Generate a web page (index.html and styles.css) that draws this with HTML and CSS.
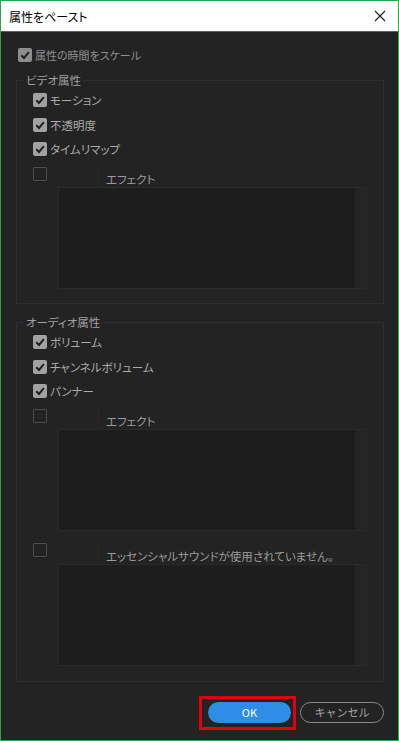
FILE: index.html
```html
<!DOCTYPE html>
<html lang="ja">
<head>
  <meta charset="UTF-8" />
  <meta name="viewport" content="width=device-width, initial-scale=1.0" />
  <title>属性をペースト</title>
  <link rel="stylesheet" href="styles.css">
</head>
<body>

  <div class="dialog">
    <div class="titlebar">
      <span class="title">属性をペースト</span>
      <svg class="close" width="12" height="12" viewBox="0 0 12 12">
        <path d="M1 1 L11 11 M11 1 L1 11" stroke="#1a1a1a" stroke-width="1.1" fill="none" />
      </svg>
    </div>

    <div class="content">
      <div class="row top">
        <span class="box checked dim"><svg viewBox="0 0 14 14"><path d="M3.3 7.3 L6 10 L10.9 4.2" /></svg></span>
        <span class="label">属性の時間をスケール</span>
      </div>

      <fieldset class="group">
        <legend>ビデオ属性</legend>
        <div class="row">
          <span class="box checked"><svg viewBox="0 0 14 14"><path d="M3.3 7.3 L6 10 L10.9 4.2" /></svg></span>
          <span class="label">モーション</span>
        </div>
        <div class="row">
          <span class="box checked"><svg viewBox="0 0 14 14"><path d="M3.3 7.3 L6 10 L10.9 4.2" /></svg></span>
          <span class="label">不透明度</span>
        </div>
        <div class="row">
          <span class="box checked"><svg viewBox="0 0 14 14"><path d="M3.3 7.3 L6 10 L10.9 4.2" /></svg></span>
          <span class="label">タイムリマップ</span>
        </div>
        <div class="row">
          <span class="box"></span>
          <span class="col-head">エフェクト</span>
        </div>
        <div class="list"><div class="pane"></div><div class="track"></div></div>
      </fieldset>

      <fieldset class="group audio">
        <legend>オーディオ属性</legend>
        <div class="row">
          <span class="box checked"><svg viewBox="0 0 14 14"><path d="M3.3 7.3 L6 10 L10.9 4.2" /></svg></span>
          <span class="label">ボリューム</span>
        </div>
        <div class="row">
          <span class="box checked"><svg viewBox="0 0 14 14"><path d="M3.3 7.3 L6 10 L10.9 4.2" /></svg></span>
          <span class="label">チャンネルボリューム</span>
        </div>
        <div class="row">
          <span class="box checked"><svg viewBox="0 0 14 14"><path d="M3.3 7.3 L6 10 L10.9 4.2" /></svg></span>
          <span class="label">パンナー</span>
        </div>
        <div class="row">
          <span class="box"></span>
          <span class="col-head">エフェクト</span>
        </div>
        <div class="list"><div class="pane"></div><div class="track"></div></div>

        <div class="row essential">
          <span class="box"></span>
          <span class="col-head">エッセンシャルサウンドが使用されていません。</span>
        </div>
        <div class="list tight"><div class="pane"></div><div class="track"></div></div>
      </fieldset>

      <div class="footer">
        <span class="highlight"><button class="btn ok">OK</button></span>
        <button class="btn cancel">キャンセル</button>
      </div>
    </div>
  </div>

</body>
</html>
```

FILE: styles.css
```css
* {
  box-sizing: border-box;
}

body {
  margin: 0;
  font-family: "Noto Sans CJK JP", "Noto Sans", sans-serif;
  font-feature-settings: "palt";
}

.dialog {
  width: 399px;
  height: 741px;
  border: 1px solid #27a844;
  background: #232323;
  display: flex;
  flex-direction: column;
}

.titlebar {
  height: 31px;
  background: #fff;
  border-bottom: 1px solid #5e5e5e;
  display: flex;
  align-items: center;
  justify-content: space-between;
  padding: 0 12px 0 8px;
}

.title {
  font-size: 12px;
  color: #000;
}

.content {
  padding: 11px 14px 0 15px;
}

.row {
  display: flex;
  align-items: center;
  gap: 3px;
  height: 24.5px;
}

.top {
  height: 24px;
  padding-left: 1px;
}

.box {
  width: 14px;
  height: 14px;
  flex: none;
  border: 1.5px solid #4b4b4b;
  border-radius: 1px;
  margin-left: 1px;
}

.box.checked {
  border: none;
  background: #a2a2a2;
  border-radius: 2px;
}

.box.dim {
  background: #8e8e8e;
}

.box svg {
  display: block;
  width: 14px;
  height: 14px;
}

.box svg path {
  fill: none;
  stroke: #1f1f1f;
  stroke-width: 2;
}

.label {
  font-size: 11.5px;
  color: #acacac;
}

.top .label {
  font-size: 11px;
  color: #8f8f8f;
}

.group {
  margin: 5px 0 0;
  padding: 0 14px 14px 15px;
  border: 1px solid #2e2e2e;
  min-inline-size: 0;
}

.group.audio {
  margin-top: 10px;
  padding-bottom: 15px;
}

legend {
  font-size: 11.5px;
  line-height: 16px;
  color: #a0a0a0;
  padding: 0 2px;
  margin-left: -8px;
}

.col-head {
  align-self: flex-end;
  margin: 0 0 -1px 48px;
  height: 20px;
  padding: 4px 0 0 7px;
  line-height: 16px;
  border-left: 1px solid #292929;
  font-size: 11.5px;
  color: #9b9b9b;
  white-space: nowrap;
}

.list {
  display: flex;
  width: 309px;
  height: 102px;
  margin: 1px 0 0 26px;
  border: 1px solid #2a2a2a;
}

.list.tight {
  margin-top: 1px;
}

.pane {
  flex: 1;
  background: #1d1d1d;
}

.track {
  width: 11px;
  background: #252525;
}

.essential {
  margin-top: 7px;
}

.footer {
  display: flex;
  justify-content: flex-end;
  align-items: center;
  gap: 4px;
  margin-top: 14px;
}

.highlight {
  display: flex;
  border: 3px solid #e00010;
  padding: 3px 2px 4px 6px;
}

.btn {
  height: 21px;
  width: 84px;
  border-radius: 11px;
  font-family: "Noto Sans CJK JP", "Noto Sans", sans-serif;
  font-size: 11px;
  padding: 0;
  line-height: 1;
}

.ok {
  width: 83px;
  background: #2f8de8;
  border: none;
  color: #fff;
}

.cancel {
  background: transparent;
  border: 1.5px solid #8a8a8a;
  color: #a3a3a3;
}
```
